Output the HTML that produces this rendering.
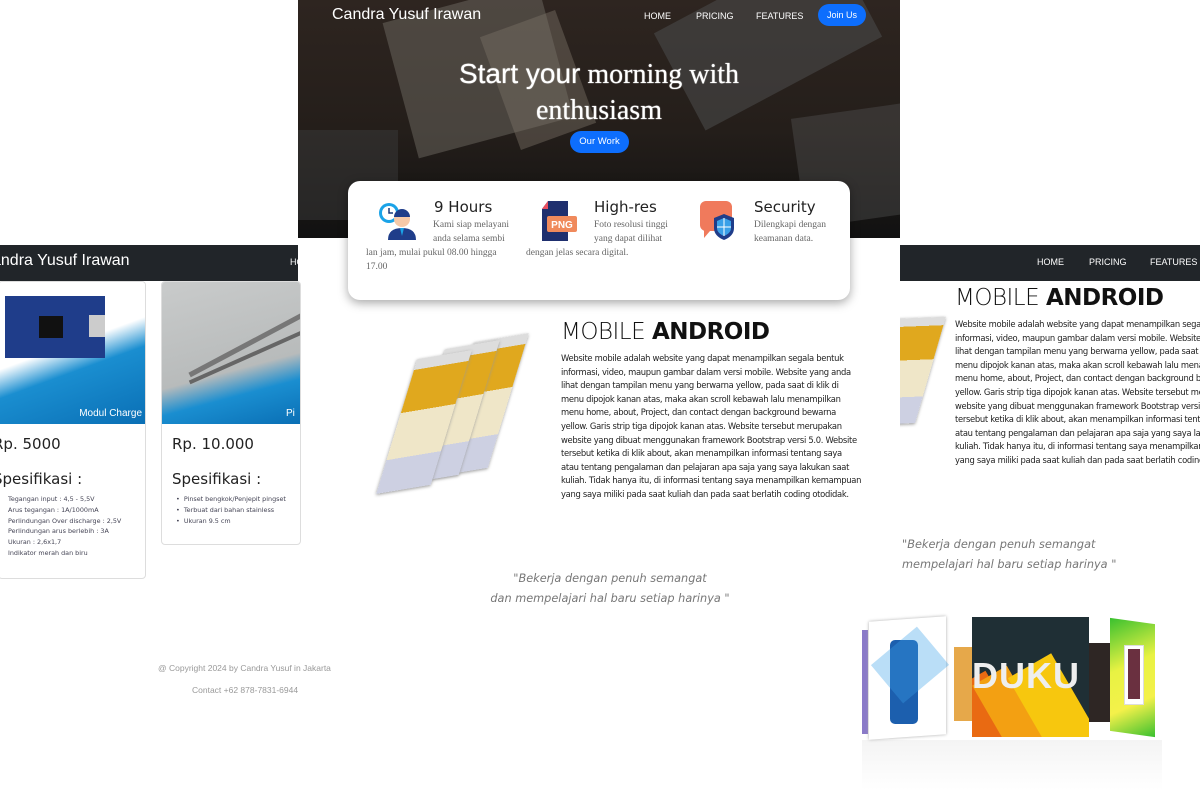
<!DOCTYPE html>
<html><head><meta charset="utf-8"><style>
*{margin:0;padding:0;box-sizing:border-box}
body{width:1200px;height:800px;position:relative;overflow:hidden;background:#fff;font-family:"Liberation Sans","DejaVu Sans",sans-serif}
.a{position:absolute}
.nav{background:#212529;color:#fff}
.p{font-size:8.4px;line-height:13.6px;color:#222;font-family:"DejaVu Sans",sans-serif;letter-spacing:-0.3px}
.t{font-family:"DejaVu Sans",sans-serif;font-size:23px;color:#111;letter-spacing:-0.5px}
.t b{font-weight:bold}
.t span{font-weight:200}
.q{font-family:"DejaVu Sans",sans-serif;font-style:italic;font-size:11.3px;color:#777;line-height:20px}
.ft{font-size:8.5px;color:#999}
.srf{font-family:"Liberation Serif",serif;font-size:9.5px;color:#666;line-height:14px}
.h3{font-family:"DejaVu Sans",sans-serif;font-size:15px;color:#222}
.li{font-family:"DejaVu Sans",sans-serif;font-size:6.4px;color:#445;line-height:10.8px}
.ph{background:linear-gradient(180deg,#ddd 0 8%,#e0a81e 8% 40%,#efe6c8 40% 75%,#cdd0e2 75%);box-shadow:0 1px 3px #999}
</style></head><body>

<!-- HERO -->
<div class="a" style="left:298px;top:0;width:602px;height:238px;overflow:hidden;background:linear-gradient(180deg,#2e2520 0%,#241e1a 55%,#111 100%)">
  <div class="a" style="left:100px;top:0;width:160px;height:140px;background:#6e6a62;opacity:.5;transform:rotate(-15deg)"></div>
  <div class="a" style="left:370px;top:-20px;width:200px;height:110px;background:#4a4a4a;opacity:.6;transform:rotate(-28deg)"></div>
  <div class="a" style="left:200px;top:20px;width:80px;height:120px;background:#7a7266;opacity:.45;transform:rotate(-20deg)"></div>
  <div class="a" style="left:500px;top:110px;width:120px;height:110px;background:#555;opacity:.4;transform:rotate(-8deg)"></div>
  <div class="a" style="left:0;top:130px;width:100px;height:90px;background:#3a3a3a;opacity:.5"></div>
  <div class="a" style="left:34px;top:6px;font-size:16px;color:#fff">Candra Yusuf Irawan</div>
  <div class="a" style="left:346px;top:11px;font-size:9px;color:#fff">HOME</div>
  <div class="a" style="left:398px;top:11px;font-size:9px;color:#fff">PRICING</div>
  <div class="a" style="left:458px;top:11px;font-size:9px;color:#fff">FEATURES</div>
  <div class="a" style="left:520px;top:4px;width:48px;height:22px;border-radius:11px;background:#0d6efd;color:#fff;font-size:9px;text-align:center;line-height:22px">Join Us</div>
  <div class="a" style="left:0;top:56px;width:602px;text-align:center;color:#fff;font-family:'Liberation Serif',serif;font-size:28px;line-height:36px;text-shadow:0 0 1px #fff"><span style="font-family:'Liberation Sans',sans-serif">Start your</span> morning with<br>enthusiasm</div>
  <div class="a" style="left:272px;top:131px;width:59px;height:22px;border-radius:11px;background:#0d6efd;color:#fff;font-size:9.5px;text-align:center;line-height:22px">Our Work</div>
</div>

<!-- LEFT PANEL -->
<div class="a nav" style="left:0;top:245px;width:298px;height:36px">
  <div class="a" style="left:-8px;top:7px;font-size:16px">andra Yusuf Irawan</div>
  <div class="a" style="left:290px;top:12px;font-size:9px">HO</div>
</div>
<div class="a" style="left:-2px;top:281px;width:148px;height:298px;border:1px solid #ddd;border-radius:4px;overflow:hidden">
  <div style="height:142px;background:linear-gradient(160deg,#fff 0%,#fff 45%,#1a8ed0 60%,#0a6fb5 100%)"></div>
  <div class="a" style="left:6px;top:14px;width:100px;height:62px;background:#1f3d8a"></div>
  <div class="a" style="left:40px;top:34px;width:24px;height:22px;background:#111"></div>
  <div class="a" style="left:90px;top:33px;width:16px;height:22px;background:#ccc"></div>
  <div class="a" style="right:3px;top:126px;color:#fff;font-size:10px">Modul Charge</div>
  <div class="a h3" style="left:-6px;top:153px">Rp. 5000</div>
  <div class="a h3" style="left:-6px;top:188px">Spesifikasi :</div>
  <div class="a li" style="left:9px;top:212px">Tegangan input : 4,5 - 5,5V<br>Arus tegangan : 1A/1000mA<br>Perlindungan Over discharge : 2,5V<br>Perlindungan arus berlebih : 3A<br>Ukuran : 2,6x1,7<br>Indikator merah dan biru</div>
</div>
<div class="a" style="left:161px;top:281px;width:140px;height:264px;border:1px solid #ddd;border-radius:4px;overflow:hidden">
  <div style="height:142px;background:linear-gradient(165deg,#c9cbcb 0%,#b8bbbb 60%,#1a8ed0 75%,#0a6fb5 100%)"></div>
  <div class="a" style="left:20px;top:60px;width:130px;height:5px;background:#777;transform:rotate(-28deg)"></div>
  <div class="a" style="left:22px;top:72px;width:130px;height:4px;background:#666;transform:rotate(-24deg)"></div>
  <div class="a" style="left:124px;top:126px;color:#fff;font-size:10px">Pi</div>
  <div class="a h3" style="left:10px;top:153px">Rp. 10.000</div>
  <div class="a h3" style="left:10px;top:188px">Spesifikasi :</div>
  <div class="a li" style="left:14px;top:212px">• &nbsp;Pinset bengkok/Penjepit pingset<br>• &nbsp;Terbuat dari bahan stainless<br>• &nbsp;Ukuran 9.5 cm</div>
</div>
<div class="a ft" style="left:158px;top:663px">@ Copyright 2024 by Candra Yusuf in Jakarta</div>
<div class="a ft" style="left:192px;top:685px">Contact +62 878-7831-6944</div>

<!-- RIGHT PANEL -->
<div class="a" style="left:900px;top:281px;width:50px;height:150px;overflow:hidden">
  <div class="a ph" style="left:-30px;top:40px;width:62px;height:100px;transform:skewY(-20deg) rotate(18deg)"></div>
</div>
<div class="a nav" style="left:900px;top:245px;width:300px;height:36px">
  <div class="a" style="left:137px;top:12px;font-size:9px">HOME</div>
  <div class="a" style="left:189px;top:12px;font-size:9px">PRICING</div>
  <div class="a" style="left:250px;top:12px;font-size:9px">FEATURES</div>
</div>
<div class="a t" style="left:955px;top:285px"><span>MOBILE</span> <b>ANDROID</b></div>
<div class="a p" style="left:955px;top:318px;width:260px;white-space:nowrap;overflow:hidden">Website mobile adalah website yang dapat menampilkan segala bentuk<br>informasi, video, maupun gambar dalam versi mobile. Website yang anda<br>lihat dengan tampilan menu yang berwarna yellow, pada saat di klik di<br>menu dipojok kanan atas, maka akan scroll kebawah lalu menampilkan<br>menu home, about, Project, dan contact dengan background bewarna<br>yellow. Garis strip tiga dipojok kanan atas. Website tersebut merupakan<br>website yang dibuat menggunakan framework Bootstrap versi 5.0. Website<br>tersebut ketika di klik about, akan menampilkan informasi tentang saya<br>atau tentang pengalaman dan pelajaran apa saja yang saya lakukan saat<br>kuliah. Tidak hanya itu, di informasi tentang saya menampilkan kemampuan<br>yang saya miliki pada saat kuliah dan pada saat berlatih coding otodidak.</div>
<div class="a q" style="left:902px;top:535px">"Bekerja dengan penuh semangat<br>mempelajari hal baru setiap harinya "</div>

<!-- carousel -->
<div class="a" style="left:862px;top:630px;width:6px;height:104px;background:#8a7ac8"></div>
<div class="a" style="left:869px;top:619px;width:77px;height:118px;background:#fff;box-shadow:0 0 3px #aaa;transform:skewY(-4deg)"></div>
<div class="a" style="left:890px;top:640px;width:28px;height:84px;border-radius:5px;background:#1c5fae"></div>
<div class="a" style="left:880px;top:640px;width:60px;height:50px;background:#3aa0e8;opacity:.35;transform:rotate(-40deg)"></div>
<div class="a" style="left:954px;top:647px;width:20px;height:74px;background:#e6a84a"></div>
<div class="a" style="left:972px;top:617px;width:117px;height:120px;background:#1f2f35;overflow:hidden">
  <div class="a" style="left:-10px;top:60px;width:60px;height:130px;background:#e96a12;transform:rotate(-30deg)"></div>
  <div class="a" style="left:30px;top:50px;width:40px;height:130px;background:#f3a012;transform:rotate(-30deg)"></div>
  <div class="a" style="left:65px;top:40px;width:50px;height:130px;background:#f7c70e;transform:rotate(-30deg)"></div>
  <div class="a" style="left:0;top:38px;font-size:36px;font-weight:bold;color:#eee;letter-spacing:1px">DUKU</div>
</div>
<div class="a" style="left:1089px;top:643px;width:21px;height:79px;background:#2e2624"></div>
<div class="a" style="left:1110px;top:621px;width:45px;height:113px;background:linear-gradient(150deg,#39c02f 0%,#e8f243 40%,#f4f14a 70%,#39c02f 100%);transform:skewY(8deg)"></div>
<div class="a" style="left:1124px;top:645px;width:20px;height:60px;background:#fff;border:1px solid #ddd"><div style="margin:3px;height:50px;background:#6a3040"></div></div>
<div class="a" style="left:862px;top:740px;width:300px;height:50px;background:linear-gradient(180deg,rgba(200,200,200,.2),rgba(255,255,255,0))"></div>

<!-- CENTER -->
<div class="a ph" style="left:452px;top:345px;width:58px;height:120px;transform:skewY(-28deg) rotate(20deg)"></div>
<div class="a ph" style="left:423px;top:352px;width:58px;height:120px;transform:skewY(-28deg) rotate(20deg)"></div>
<div class="a ph" style="left:395px;top:362px;width:58px;height:120px;transform:skewY(-28deg) rotate(20deg)"></div>
<div class="a t" style="left:561px;top:319px"><span>MOBILE</span> <b>ANDROID</b></div>
<div class="a p" style="left:561px;top:352px;width:310px;white-space:nowrap">Website mobile adalah website yang dapat menampilkan segala bentuk<br>informasi, video, maupun gambar dalam versi mobile. Website yang anda<br>lihat dengan tampilan menu yang berwarna yellow, pada saat di klik di<br>menu dipojok kanan atas, maka akan scroll kebawah lalu menampilkan<br>menu home, about, Project, dan contact dengan background bewarna<br>yellow. Garis strip tiga dipojok kanan atas. Website tersebut merupakan<br>website yang dibuat menggunakan framework Bootstrap versi 5.0. Website<br>tersebut ketika di klik about, akan menampilkan informasi tentang saya<br>atau tentang pengalaman dan pelajaran apa saja yang saya lakukan saat<br>kuliah. Tidak hanya itu, di informasi tentang saya menampilkan kemampuan<br>yang saya miliki pada saat kuliah dan pada saat berlatih coding otodidak.</div>
<div class="a q" style="left:484px;top:569px;width:252px;text-align:center">"Bekerja dengan penuh semangat<br>dan mempelajari hal baru setiap harinya "</div>

<!-- feature card -->
<div class="a" style="left:348px;top:181px;width:502px;height:119px;background:#fff;border-radius:12px;box-shadow:0 3px 10px rgba(0,0,0,.35)">
  <svg class="a" style="left:30px;top:19px" width="40" height="42" viewBox="0 0 40 42">
    <circle cx="11" cy="13" r="10" fill="#1aa3e8"/><circle cx="11" cy="13" r="7" fill="#fff"/><path d="M11 8v5h4" stroke="#1a3a7a" stroke-width="1.5" fill="none"/>
    <circle cx="24" cy="19" r="8" fill="#f6c9a8"/><path d="M16 17a8 8 0 0 1 16 0z" fill="#1f3d8a"/>
    <path d="M10 40q0-12 14-12t14 12z" fill="#1f3d8a"/><path d="M22 28h4l-2 8z" fill="#1aa3e8"/>
  </svg>
  <div class="a" style="left:86px;top:17px;font-family:'DejaVu Sans',sans-serif;font-size:15px;color:#222">9 Hours</div>
  <div class="a srf" style="left:85px;top:37px">Kami siap melayani<br>anda selama sembi</div>
  <div class="a srf" style="left:18px;top:65px">lan jam, mulai pukul 08.00 hingga<br>17.00</div>

  <svg class="a" style="left:192px;top:20px" width="38" height="42" viewBox="0 0 38 42">
    <path d="M8 0h20l0 0v40H2V8z" fill="#1f2f6e"/><path d="M2 8h6V0z" fill="#e94f60"/>
    <rect x="7" y="15" width="30" height="16" rx="2" fill="#f08a5c"/><text x="22" y="27" font-size="10" fill="#fff" text-anchor="middle" font-family="Liberation Sans" font-weight="bold">PNG</text>
  </svg>
  <div class="a" style="left:246px;top:17px;font-family:'DejaVu Sans',sans-serif;font-size:15px;color:#222">High-res</div>
  <div class="a srf" style="left:246px;top:37px">Foto resolusi tinggi<br>yang dapat dilihat</div>
  <div class="a srf" style="left:178px;top:65px">dengan jelas secara digital.</div>

  <svg class="a" style="left:350px;top:19px" width="40" height="42" viewBox="0 0 40 42">
    <rect x="2" y="1" width="32" height="30" rx="6" fill="#f07a5c"/><path d="M6 30v8l6-7z" fill="#f07a5c"/>
    <path d="M26 14l10 4v10q0 8-10 12q-10-4-10-12V18z" fill="#1f3d8a"/><path d="M26 18l7 3v7q0 5-7 8q-7-3-7-8v-7z" fill="#3aa0e8"/><path d="M26 18v18M19 27h14" stroke="#fff" stroke-width="1"/>
  </svg>
  <div class="a" style="left:406px;top:17px;font-family:'DejaVu Sans',sans-serif;font-size:15px;color:#222">Security</div>
  <div class="a srf" style="left:406px;top:37px">Dilengkapi dengan<br>keamanan data.</div>
</div>
</body></html>
